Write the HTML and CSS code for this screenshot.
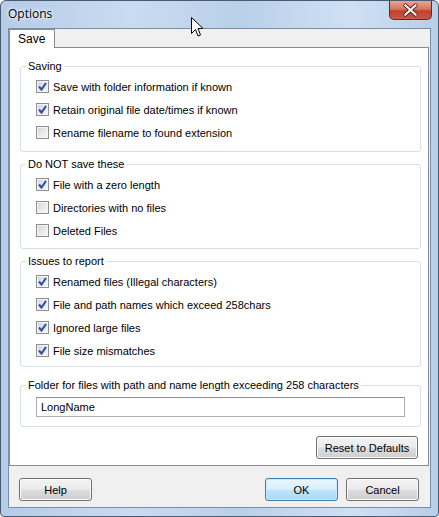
FILE: index.html
```html
<!DOCTYPE html>
<html lang="en">
<head>
    <meta charset="UTF-8">
    <title>Options</title>
    <link rel="stylesheet" href="styles.css">
</head>
<body>

<div class="window">
    <div class="titlebar">
        <span class="title">Options</span>
        <button class="close" title="Close">
            <svg width="43" height="18" viewBox="0 0 43 18">
                <path d="M16 4 L27 14 M27 4 L16 14" stroke="#5a1a1a" stroke-width="4" stroke-linecap="round"/>
                <path d="M16 4 L27 14 M27 4 L16 14" stroke="#ffffff" stroke-width="2.2" stroke-linecap="round"/>
            </svg>
        </button>
    </div>

    <div class="client">
        <!-- Tab strip -->
        <div class="tabs">
            <div class="tab active">Save</div>
        </div>

        <div class="tabpage">
            <fieldset class="group g-saving">
                <legend>Saving</legend>
                <label class="check"><span class="box on"><svg width="11" height="11" viewBox="0 0 11 11"><path d="M2 5.5 L4.5 8.5 L9 2" fill="none" stroke="#3449a0" stroke-width="2"/></svg></span>Save with folder information if known</label>
                <label class="check"><span class="box on"><svg width="11" height="11" viewBox="0 0 11 11"><path d="M2 5.5 L4.5 8.5 L9 2" fill="none" stroke="#3449a0" stroke-width="2"/></svg></span>Retain original file date/times if known</label>
                <label class="check"><span class="box"></span>Rename filename to found extension</label>
            </fieldset>

            <fieldset class="group g-nosave">
                <legend>Do NOT save these</legend>
                <label class="check"><span class="box on"><svg width="11" height="11" viewBox="0 0 11 11"><path d="M2 5.5 L4.5 8.5 L9 2" fill="none" stroke="#3449a0" stroke-width="2"/></svg></span>File with a zero length</label>
                <label class="check"><span class="box"></span>Directories with no files</label>
                <label class="check"><span class="box"></span>Deleted Files</label>
            </fieldset>

            <fieldset class="group g-issues">
                <legend>Issues to report</legend>
                <label class="check"><span class="box on"><svg width="11" height="11" viewBox="0 0 11 11"><path d="M2 5.5 L4.5 8.5 L9 2" fill="none" stroke="#3449a0" stroke-width="2"/></svg></span>Renamed files (Illegal characters)</label>
                <label class="check"><span class="box on"><svg width="11" height="11" viewBox="0 0 11 11"><path d="M2 5.5 L4.5 8.5 L9 2" fill="none" stroke="#3449a0" stroke-width="2"/></svg></span>File and path names which exceed 258chars</label>
                <label class="check"><span class="box on"><svg width="11" height="11" viewBox="0 0 11 11"><path d="M2 5.5 L4.5 8.5 L9 2" fill="none" stroke="#3449a0" stroke-width="2"/></svg></span>Ignored large files</label>
                <label class="check"><span class="box on"><svg width="11" height="11" viewBox="0 0 11 11"><path d="M2 5.5 L4.5 8.5 L9 2" fill="none" stroke="#3449a0" stroke-width="2"/></svg></span>File size mismatches</label>
            </fieldset>

            <fieldset class="group g-folder">
                <legend>Folder for files with path and name length exceeding 258 characters</legend>
                <input type="text" class="textbox" value="LongName">
            </fieldset>

            <div class="reset-row">
                <button class="btn reset">Reset to Defaults</button>
            </div>
        </div>

        <!-- Dialog buttons -->
        <div class="footer">
            <button class="btn">Help</button>
            <span class="spacer"></span>
            <button class="btn default">OK</button>
            <button class="btn">Cancel</button>
        </div>
    </div>

    <!-- mouse pointer -->
    <svg class="cursor" width="13" height="21" viewBox="0 0 13 21">
        <path d="M0.5 0.5 L0.5 16.5 L4.5 12.5 L7 19 L9.5 18 L7 11.5 L12 11.5 Z" fill="#fff" stroke="#000" stroke-width="1"/>
    </svg>
</div>

</body>
</html>
```

FILE: styles.css
```css
body {
    margin: 0;
    font-family: "Liberation Sans", Arial, sans-serif;
    font-size: 11px;
    color: #000;
    background: #ffffff;
}
/* Aero style window frame */
.window {
    position: relative;
    width: 439px;
    height: 517px;
    box-sizing: border-box;
    border: 1px solid #4a5b72;
    border-radius: 6px 6px 4px 4px;
    padding: 0 7px 8px 7px;
    background: linear-gradient(90deg, #b4cce8 0%, #c9dbef 30%, #b9d0ea 55%, #cfe0f3 80%, #b7cee9 100%);
}
.titlebar {
    height: 27px;
    display: flex;
    align-items: flex-start;
}
.title {
    font-family: "Open Sans", "Noto Sans", sans-serif;
    font-size: 12px;
    margin-top: 4px;
    text-shadow: 0 0 6px #ffffff, 0 0 3px #ffffff;
}
.close {
    margin-left: auto;
    margin-right: -1px;
    width: 43px;
    height: 19px;
    padding: 0;
    border: 1px solid #6b2424;
    border-top: none;
    border-radius: 0 0 5px 5px;
    background: linear-gradient(180deg, #e8a493 0%, #d47563 45%, #c0412c 55%, #c85a44 100%);
    display: flex;
    align-items: center;
    justify-content: center;
}
.close svg {
    display: block;
}
.client {
    height: 480px;
    box-sizing: border-box;
    border: 1px solid #7c8ea5;
    background-color: #f0f0f0;
    display: flex;
    flex-direction: column;
}
/* Tabs */
.tabs {
    height: 18px;
    display: flex;
    position: relative;
    z-index: 1;
}
.tab {
    height: 19px;
    box-sizing: border-box;
    padding: 0 9px 0 8px;
    line-height: 18px;
    font-size: 12px;
    border: 1px solid #898c95;
    border-bottom: none;
    background-color: #ffffff;
}
.tabpage {
    height: 419px;
    box-sizing: border-box;
    margin-right: 1px;
    border: 1px solid #898c95;
    background-color: #ffffff;
    display: flex;
    flex-direction: column;
}
/* Group boxes */
.group {
    width: 401px;
    box-sizing: border-box;
    margin: 0 0 0 10px;
    padding: 2px 0 6px 15px;
    border: 1px solid #d5dfe5;
    border-radius: 3px;
}
.group legend {
    padding: 0 2px;
    margin-left: -10px;
    line-height: 14px;
}
.g-saving { margin-top: 11px; padding-bottom: 7px; }
.g-nosave { margin-top: 5px; }
.g-issues { margin-top: 5px; padding-bottom: 4px; }
.g-folder { margin-top: 11px; padding-top: 5px; padding-bottom: 9px; }

.check {
    display: flex;
    align-items: center;
    height: 23px;
}
.box {
    width: 13px;
    height: 13px;
    box-sizing: border-box;
    border: 1px solid #8e8f8f;
    margin-right: 4px;
    background: linear-gradient(135deg, #d4d4d4 0%, #ececec 60%, #fafafa 100%);
    box-shadow: inset 0 0 0 1px #f4f4f4;
}
.box.on {
    background: linear-gradient(135deg, #c9d4e4 0%, #e4ebf4 60%, #f6f8fb 100%);
}
.box svg {
    display: block;
}
.textbox {
    display: block;
    width: 369px;
    height: 20px;
    box-sizing: border-box;
    margin: 0;
    padding: 0 4px;
    border: 1px solid #abadb3;
    border-top-color: #8e9199;
    font-family: "Liberation Sans", Arial, sans-serif;
    font-size: 11px;
    color: #000;
}
.reset-row {
    display: flex;
    justify-content: flex-end;
    margin-top: 9px;
    padding-right: 10px;
}
/* Vista buttons */
.btn {
    height: 23px;
    width: 73px;
    padding: 0;
    font-family: "Liberation Sans", Arial, sans-serif;
    font-size: 11px;
    color: #000;
    border: 1px solid #707070;
    border-radius: 3px;
    background: linear-gradient(180deg, #f3f3f3 0%, #ebebeb 48%, #dddddd 52%, #cfcfcf 100%);
    box-shadow: inset 0 0 0 1px #fbfbfb;
}
.btn.reset {
    width: 102px;
}
.btn.default {
    border-color: #3c7fb1;
    background: linear-gradient(180deg, #eaf6fd 0%, #d9f0fc 48%, #bee6fd 52%, #a7d9f5 100%);
    box-shadow: inset 0 0 0 1px #c7ebfd;
}
.footer {
    display: flex;
    gap: 8px;
    padding: 12px 11px 0 10px;
}
.spacer {
    flex: 1;
}
.cursor {
    position: absolute;
    left: 190px;
    top: 16px;
}
```
